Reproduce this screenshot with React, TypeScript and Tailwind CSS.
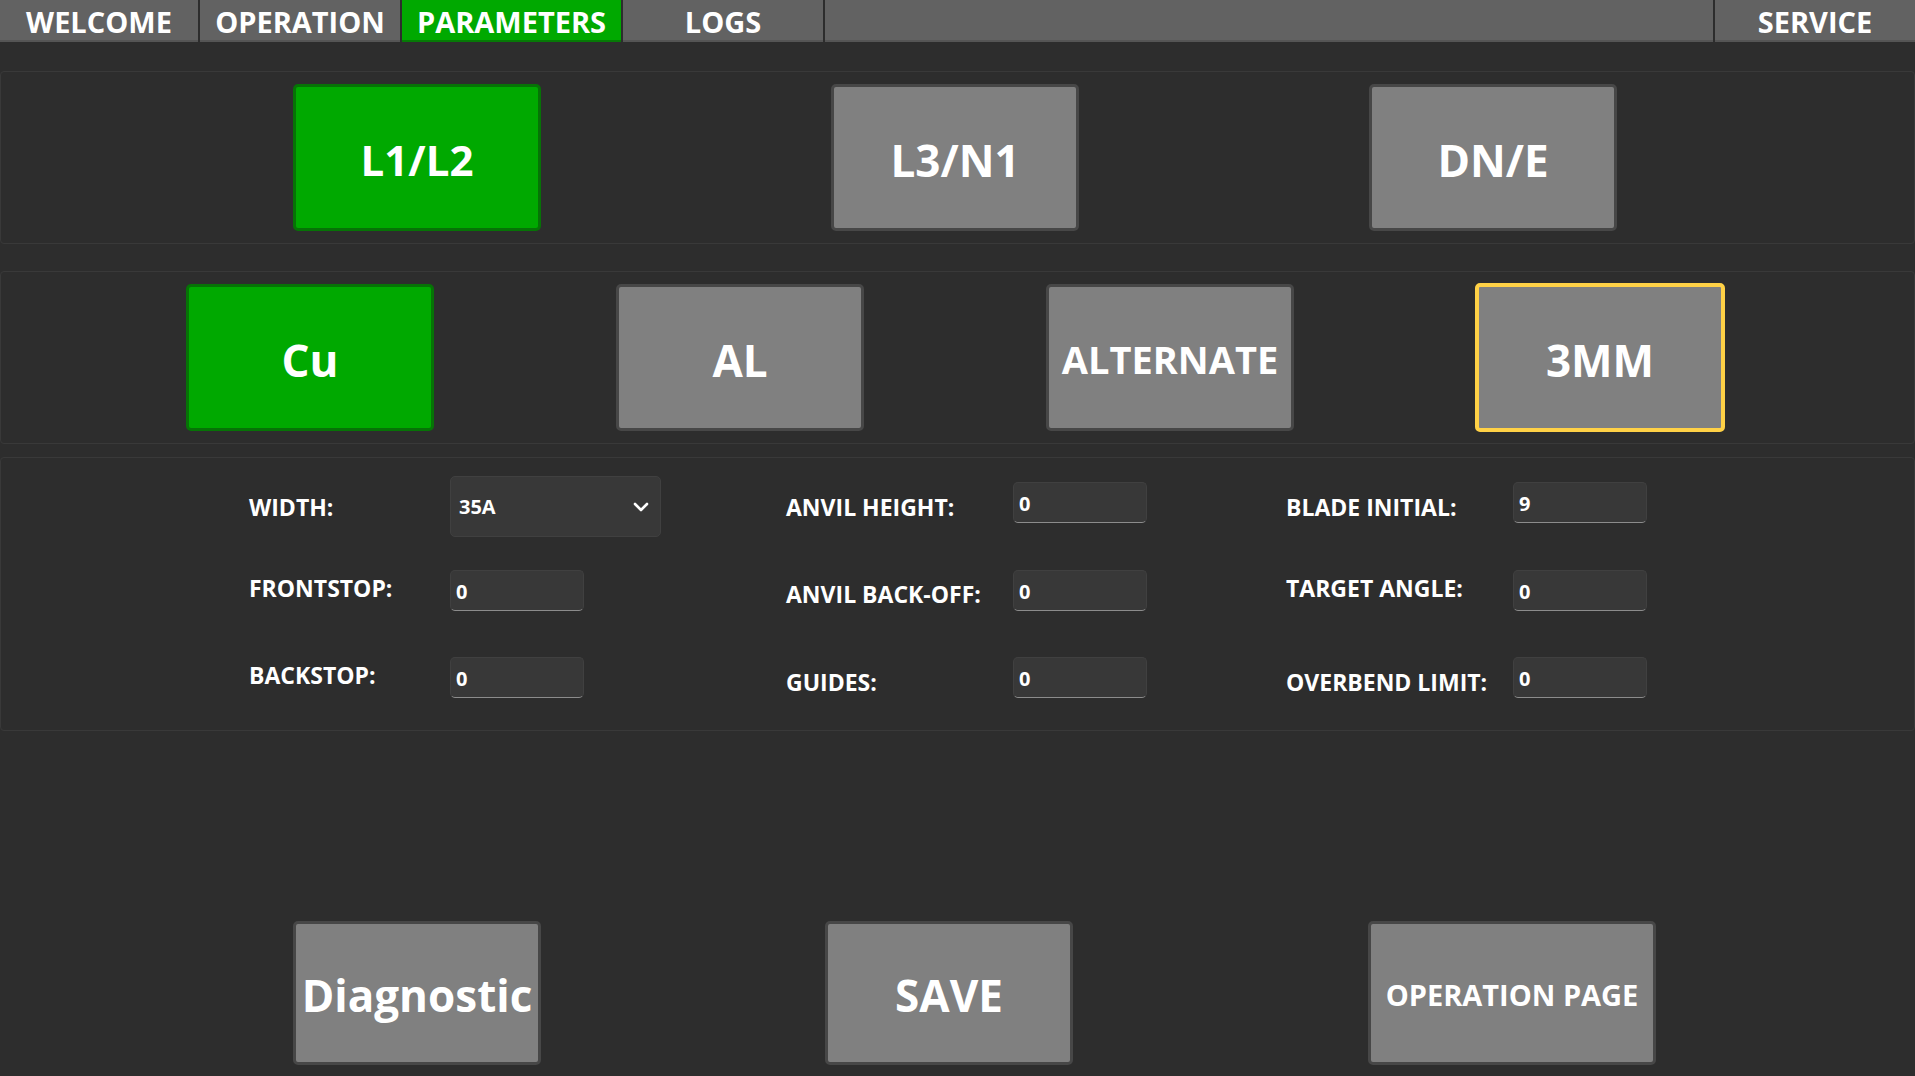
import { ChevronDown } from "lucide-react";
import { clsx } from "clsx";

const fontClass = "font-['Open_Sans','Noto_Sans',sans-serif]";

function Tab({ label, active, className }: { label: string; active?: boolean; className: string }) {
  return (
    <div
      className={clsx(
        "flex items-center justify-center border-b-2 pt-[2px] text-[29px] leading-none font-bold text-white",
        active ? "border-[#067a06] bg-[#00a900]" : "border-[#555555] bg-[#626262]",
        className,
      )}
    >
      {label}
    </div>
  );
}

function BigButton({
  label,
  active,
  focused,
  className,
}: {
  label: string;
  active?: boolean;
  focused?: boolean;
  className: string;
}) {
  return (
    <button
      type="button"
      className={clsx(
        "flex shrink-0 items-center justify-center rounded-[5px] leading-none font-bold text-white",
        active && "border-[3px] border-[#067306] bg-[#00a900]",
        focused && "border-4 border-[#ffd146] bg-[#808080]",
        !active && !focused && "border-[3px] border-[#474747] bg-[#808080]",
        className,
      )}
    >
      {label}
    </button>
  );
}

function Label({ text, className }: { text: string; className: string }) {
  return <div className={clsx("text-[23px] leading-[30px] font-bold whitespace-nowrap text-white", className)}>{text}</div>;
}

function NumberBox({ value, className, textClass }: { value: string; className?: string; textClass: string }) {
  return (
    <div
      className={clsx(
        "relative flex h-[41px] w-[134px] rounded-[5px] border border-[#404040] border-b-[#8c8c8c] bg-[#383838] pl-[5px] text-[20px] leading-none font-bold text-white",
        className,
      )}
    >
      <span className={textClass}>{value}</span>
    </div>
  );
}

export default function App() {
  return (
    <div className={clsx("flex h-screen w-full flex-col overflow-hidden bg-[#2d2d2d]", fontClass)}>
      <nav className="flex h-[42px] shrink-0 gap-[2px]">
        <Tab label="WELCOME" className="w-[198px]" />
        <Tab label="OPERATION" className="w-[200px]" />
        <Tab label="PARAMETERS" active className="w-[219px]" />
        <Tab label="LOGS" className="w-[200px]" />
        <Tab label="" className="flex-1" />
        <Tab label="SERVICE" className="w-[200px]" />
      </nav>

      <section className="mt-[29px] flex h-[173px] shrink-0 items-center gap-[290px] rounded-[4px] border border-[#393939] pl-[292px]">
        <BigButton label="L1/L2" active className="h-[147px] w-[248px] pt-1 text-[42px]" />
        <BigButton label="L3/N1" className="h-[147px] w-[248px] pt-1 text-[44px]" />
        <BigButton label="DN/E" className="h-[147px] w-[248px] pt-1 text-[44px]" />
      </section>

      <section className="mt-[27px] flex h-[173px] shrink-0 items-center rounded-[4px] border border-[#393939] pl-[185px]">
        <BigButton label="Cu" active className="h-[147px] w-[248px] pt-1 text-[44px]" />
        <BigButton label="AL" className="ml-[182px] h-[147px] w-[248px] pt-1 text-[44px]" />
        <BigButton label="ALTERNATE" className="ml-[182px] h-[147px] w-[248px] pt-[2px] text-[38px]" />
        <BigButton label="3MM" focused className="ml-[181px] h-[149px] w-[250px] pt-1 text-[44px]" />
      </section>

      <section className="mt-[13px] grid h-[274px] shrink-0 grid-cols-[201px_336px_227px_273px_227px_134px] grid-rows-[94px_87px_41px] items-start rounded-[4px] border border-[#393939] pt-[18px] pl-[248px]">
        <Label text="WIDTH:" className="mt-[16px]" />
        <div className="flex h-[61px] w-[211px] items-center justify-between rounded-[5px] border border-[#404040] bg-[#383838] pr-[7px] pl-[8px] text-[20px] font-bold text-white">
          <span>35A</span>
          <ChevronDown size={24} strokeWidth={2.6} />
        </div>
        <Label text="ANVIL HEIGHT:" className="mt-[16px]" />
        <NumberBox value="0" className="mt-[6px]" textClass="mt-[11px]" />
        <Label text="BLADE INITIAL:" className="mt-[16px]" />
        <NumberBox value="9" className="mt-[6px]" textClass="mt-[11px]" />

        <Label text="FRONTSTOP:" className="mt-[3px]" />
        <NumberBox value="0" textClass="mt-[11px]" />
        <Label text="ANVIL BACK-OFF:" className="mt-[9px]" />
        <NumberBox value="0" textClass="mt-[11px]" />
        <Label text="TARGET ANGLE:" className="mt-[3px]" />
        <NumberBox value="0" textClass="mt-[11px]" />

        <Label text="BACKSTOP:" className="mt-[3px]" />
        <NumberBox value="0" textClass="mt-[11px]" />
        <Label text="GUIDES:" className="mt-[10px]" />
        <NumberBox value="0" textClass="mt-[11px]" />
        <Label text="OVERBEND LIMIT:" className="mt-[10px]" />
        <NumberBox value="0" textClass="mt-[11px]" />
      </section>

      <section className="mt-[190px] flex shrink-0 pl-[293px]">
        <BigButton label="Diagnostic" className="h-[144px] w-[248px] pt-1 text-[44px]" />
        <BigButton label="SAVE" className="ml-[284px] h-[144px] w-[248px] pt-1 text-[44px]" />
        <BigButton label="OPERATION PAGE" className="ml-[295px] h-[144px] w-[288px] pt-[2px] text-[29px]" />
      </section>
    </div>
  );
}
